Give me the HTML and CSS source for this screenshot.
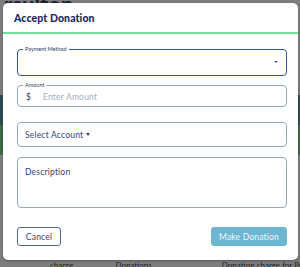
FILE: index.html
```html
<!DOCTYPE html>
<html>
<head>
	<meta charset="utf-8">
	<title>Accept Donation</title>
	<link rel="stylesheet" href="styles.css">
</head>
<body>

	<div class="page">
		<div class="brand">rsulton</div>
		<div class="band band-teal"></div>
		<div class="band band-green"></div>
		<div class="table-head">
			<span class="col-1">charge</span>
			<span class="col-2">Donations</span>
			<span class="col-3">Donation charge for Pro</span>
		</div>
	</div>

	<div class="modal">
		<div class="modal-header">
			<h3>Accept Donation</h3>
		</div>
		<div class="modal-body">
			<fieldset class="field field-active">
				<legend>Payment Method</legend>
				<div class="select-row">
					<span></span>
					<span class="caret small"></span>
				</div>
			</fieldset>

			<fieldset class="field">
				<legend>Amount</legend>
				<div class="amount-row">
					<span class="currency">$</span>
					<span class="placeholder">Enter Amount</span>
				</div>
			</fieldset>

			<div class="box account">
				Select Account <span class="caret"></span>
			</div>

			<div class="box description">Description</div>

			<div class="actions">
				<button class="btn btn-outline">Cancel</button>
				<button class="btn btn-primary">Make Donation</button>
			</div>
		</div>
	</div>

</body>
</html>
```

FILE: styles.css
```css
* {
	margin: 0;
	padding: 0;
	box-sizing: border-box;
}

html, body {
	height: 100%;
}

body {
	background-color: #7c7c7c;
	font-family: "Lato", "Liberation Sans", sans-serif;
	overflow: hidden;
}

/* page behind the overlay */
.page {
	position: relative;
	height: 100%;
}

.brand {
	font-size: 22px;
	font-weight: 900;
	color: #1c2233;
	line-height: 10px;
	padding-left: 4px;
	height: 40px;
	overflow: hidden;
}

.band {
	width: 100%;
	height: 30px;
}

.band-teal {
	margin-top: 55px;
	background-color: #2f4a52;
}

.band-green {
	background-color: #3d6a4a;
}

.table-head {
	position: absolute;
	left: 0;
	right: 0;
	top: 260px;
	font-size: 8px;
	color: #1f2630;
	display: flex;
	white-space: nowrap;
}

.col-1 { margin-left: 50px; }
.col-2 { margin-left: 42px; }
.col-3 { margin-left: 70px; }

/* modal */
.modal {
	position: absolute;
	top: 3px;
	left: 3px;
	width: 295px;
	height: 257px;
	background-color: #fff;
	border-radius: 5px;
	box-shadow: 0 1px 2px rgba(0, 0, 0, .3);
	overflow: hidden;
}

.modal-header {
	height: 31px;
	border-bottom: 2px solid #6ee09a;
	padding: 9px 11px 0;
}

.modal-header h3 {
	font-size: 10.5px;
	font-weight: 900;
	color: #1b2b58;
	letter-spacing: .1px;
}

.modal-body {
	padding: 12px 11px 0 14px;
	display: flex;
	flex-direction: column;
	color: #2d4673;
}

.field {
	border: 1px solid #98a7bd;
	border-radius: 4px;
	padding: 0 8px;
	height: 25px;
	margin-bottom: 8px;
}

.field-active {
	border: 1.5px solid #34558a;
	height: 30px;
	margin-bottom: 6px;
}

.field legend {
	font-size: 5.5px;
	color: #2b3f66;
	padding: 0 2px;
	margin-left: -3px;
	line-height: 6px;
}

.select-row {
	display: flex;
	justify-content: space-between;
	align-items: center;
	height: 20px;
}

.amount-row {
	display: flex;
	align-items: center;
	height: 17px;
	font-size: 8.5px;
}

.currency {
	color: #2f3d55;
	width: 17px;
}

.placeholder {
	color: #a4adbd;
	letter-spacing: .2px;
}

.caret {
	display: inline-block;
	width: 0;
	height: 0;
	border-left: 2.5px solid transparent;
	border-right: 2.5px solid transparent;
	border-top: 3px solid #2d4673;
	vertical-align: middle;
	margin-left: 1px;
}

.caret.small {
	border-top-color: #555;
	border-left-width: 2px;
	border-right-width: 2px;
	border-top-width: 2px;
}

.box {
	border: 1px solid #98a7bd;
	border-radius: 4px;
	font-size: 8.5px;
	padding: 0 7px;
	letter-spacing: .2px;
}

.account {
	margin-top: 7px;
	height: 25px;
	display: flex;
	align-items: center;
	gap: 2px;
}

.description {
	margin-top: 10px;
	height: 51px;
	padding-top: 9px;
}

.actions {
	display: flex;
	justify-content: space-between;
	margin-top: 19px;
}

.btn {
	font-family: inherit;
	font-size: 8.5px;
	height: 19px;
	border-radius: 3px;
	letter-spacing: .2px;
}

.btn-outline {
	width: 44px;
	background: #fff;
	border: 1px solid #506a94;
	color: #2d4673;
}

.btn-primary {
	width: 76px;
	background-color: #6cb6d1;
	border: 1px solid #6cb6d1;
	color: #eef7fb;
}
```
